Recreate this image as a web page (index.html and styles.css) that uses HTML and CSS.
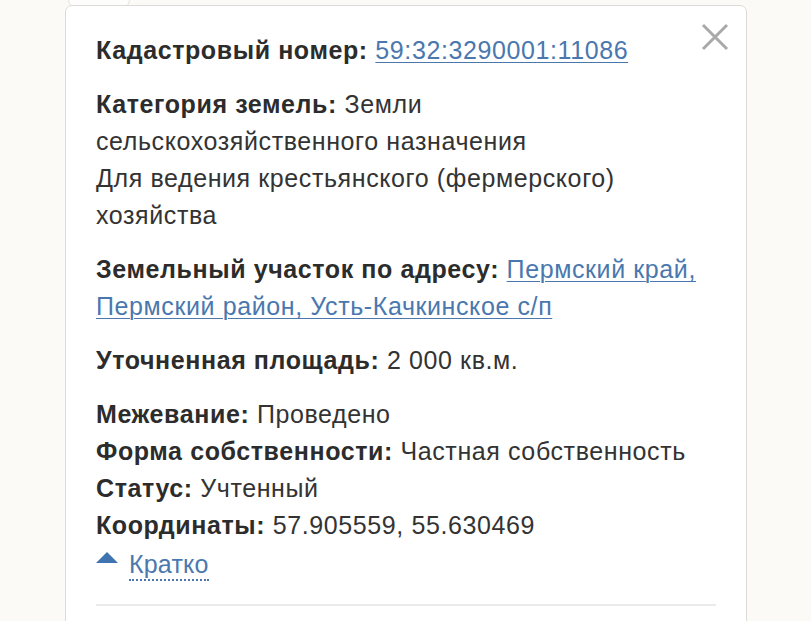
FILE: index.html
```html
<!DOCTYPE html>
<html lang="ru">
<head>
<meta charset="utf-8">
<title>Кадастровая информация</title>
<link rel="stylesheet" href="styles.css">
</head>
<body>
<div class="page">
  <div class="tab-behind"></div>
  <div class="panel">
    <button class="close" aria-label="Закрыть">
      <svg width="28" height="28" viewBox="0 0 28 28"><path d="M2 2 L26 26 M26 2 L2 26" stroke="#a9a9a9" stroke-width="3" fill="none"/></svg>
    </button>
    <p class="row"><b>Кадастровый номер:</b> <a href="#">59:32:3290001:11086</a></p>
    <p class="row"><b>Категория земель:</b> Земли<br>сельскохозяйственного назначения<br>Для ведения крестьянского (фермерского)<br>хозяйства</p>
    <p class="row"><b>Земельный участок по адресу:</b> <a href="#">Пермский край,<br>Пермский район, Усть-Качкинское с/п</a></p>
    <p class="row"><b>Уточненная площадь:</b> 2 000 кв.м.</p>
    <div class="group">
      <p class="line"><b>Межевание:</b> Проведено</p>
      <p class="line"><b>Форма собственности:</b> Частная собственность</p>
      <p class="line"><b>Статус:</b> Учтенный</p>
      <p class="line"><b>Координаты:</b> 57.905559, 55.630469</p>
      <p class="line toggle"><span class="tri"></span><a href="#" class="dotted">Кратко</a></p>
    </div>
    <div class="divider"></div>
  </div>
</div>
</body>
</html>
```
FILE: styles.css
```css
html, body {
  margin: 0;
  padding: 0;
  background: #fbfaf6;
  height: 100%;
  overflow: hidden;
}
.page {
  position: relative;
  padding: 5px 0 0 65px;
  font-family: "Liberation Sans", Arial, sans-serif;
  color: #333;
}
.tab-behind {
  position: absolute;
  left: 68px;
  top: -10px;
  width: 60px;
  height: 16px;
  border: 1px solid #e6e4df;
  border-radius: 8px;
  background: #fdfdfc;
}
.panel {
  position: relative;
  width: 620px;
  height: 700px;
  background: #fff;
  border: 1px solid #dcdbd8;
  border-radius: 7px;
  padding: 26px 30px 0 30px;
  font-size: 25px;
  letter-spacing: 0.6px;
  line-height: 37px;
}
.close {
  position: absolute;
  right: 17px;
  top: 17px;
  width: 28px;
  height: 28px;
  padding: 0;
  border: 0;
  background: none;
  cursor: pointer;
}
.close svg { display: block; }
.row {
  margin: 0 0 17px 0;
}
.line {
  margin: 0;
}
.group {
  margin-top: 0;
}
b { font-weight: bold; color: #2c2c2c; }
a {
  color: #4a78ae;
  text-decoration: underline;
  text-underline-offset: 3px;
  text-decoration-thickness: 1px;
}
.toggle {
  display: flex;
  align-items: center;
  gap: 11px;
  height: 37px;
  margin-top: -1px;
  letter-spacing: 0.2px;
}
.tri {
  width: 0;
  height: 0;
  border-left: 11px solid transparent;
  border-right: 11px solid transparent;
  border-bottom: 11px solid #3f74b0;
  margin-top: -9px;
}
a.dotted {
  text-decoration: none;
  border-bottom: 2px dotted #4a78ae;
  line-height: 30px;
  margin-top: 6px;
}
.divider {
  margin-top: 24px;
  height: 2px;
  background: #ebebeb;
}
```
